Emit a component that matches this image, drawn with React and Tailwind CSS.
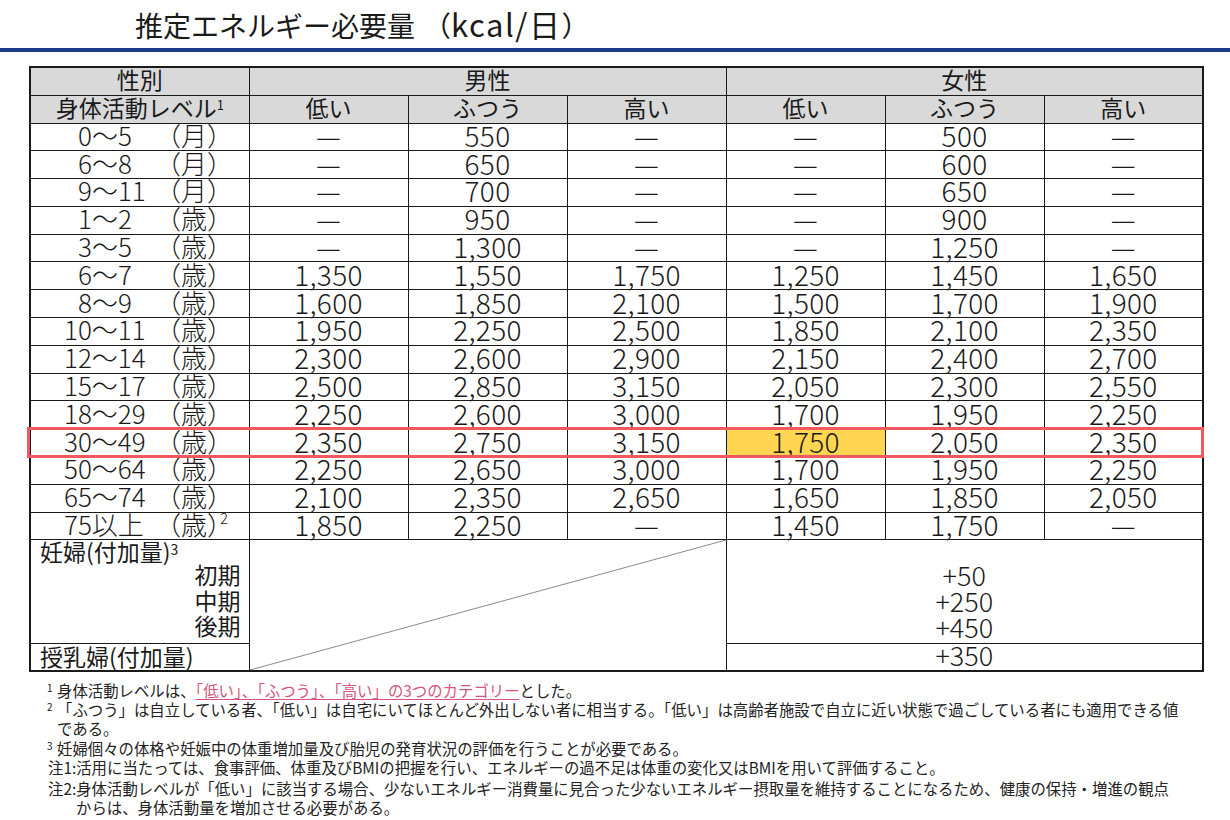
const rows = [
  { age: '0～5', unit: '（月）', pad: 'pl-[47px]', m: ['—', '550', '—'], f: ['—', '500', '—'] },
  { age: '6～8', unit: '（月）', pad: 'pl-[47px]', m: ['—', '650', '—'], f: ['—', '600', '—'] },
  { age: '9～11', unit: '（月）', pad: 'pl-[47px]', m: ['—', '700', '—'], f: ['—', '650', '—'] },
  { age: '1～2', unit: '（歳）', pad: 'pl-[47px]', m: ['—', '950', '—'], f: ['—', '900', '—'] },
  { age: '3～5', unit: '（歳）', pad: 'pl-[47px]', m: ['—', '1,300', '—'], f: ['—', '1,250', '—'] },
  { age: '6～7', unit: '（歳）', pad: 'pl-[47px]', m: ['1,350', '1,550', '1,750'], f: ['1,250', '1,450', '1,650'] },
  { age: '8～9', unit: '（歳）', pad: 'pl-[47px]', m: ['1,600', '1,850', '2,100'], f: ['1,500', '1,700', '1,900'] },
  { age: '10～11', unit: '（歳）', pad: 'pl-[33px]', m: ['1,950', '2,250', '2,500'], f: ['1,850', '2,100', '2,350'] },
  { age: '12～14', unit: '（歳）', pad: 'pl-[33px]', m: ['2,300', '2,600', '2,900'], f: ['2,150', '2,400', '2,700'] },
  { age: '15～17', unit: '（歳）', pad: 'pl-[33px]', m: ['2,500', '2,850', '3,150'], f: ['2,050', '2,300', '2,550'] },
  { age: '18～29', unit: '（歳）', pad: 'pl-[33px]', m: ['2,250', '2,600', '3,000'], f: ['1,700', '1,950', '2,250'] },
  { age: '30～49', unit: '（歳）', pad: 'pl-[33px]', m: ['2,350', '2,750', '3,150'], f: ['1,750', '2,050', '2,350'], mark: true },
  { age: '50～64', unit: '（歳）', pad: 'pl-[33px]', m: ['2,250', '2,650', '3,000'], f: ['1,700', '1,950', '2,250'] },
  { age: '65～74', unit: '（歳）', pad: 'pl-[33px]', m: ['2,100', '2,350', '2,650'], f: ['1,650', '1,850', '2,050'] },
  { age: '75以上', unit: '（歳）', pad: 'pl-[33px]', m: ['1,850', '2,250', '—'], f: ['1,450', '1,750', '—'], sup: '2' },
];

const cell = 'border border-[#1a1a1a] p-0 pb-[4px] text-center align-middle';
const num = 'border border-[#1a1a1a] p-0 pb-[4px] text-center align-middle text-[28px] tracking-[0.3px]';

export default function App() {
  return (
    <div className="w-[1230px] h-[820px] bg-white text-[#1a1a1a] overflow-hidden font-['Noto_Sans_CJK_JP','Noto_Sans',sans-serif]">
      {/* タイトル */}
      <div className="h-[48px] pl-[135px] pt-[9px]">
        <h1 className="text-[28px] leading-[30px] font-normal whitespace-nowrap">
          推定エネルギー必要量
          <span className="inline-block ml-[8px]">（</span>
          <span className="text-[31px] tracking-[1.5px]">kcal/日</span>
          <span className="inline-block">）</span>
        </h1>
      </div>
      <div className="h-[4px] bg-[#1f3b8c]" />

      {/* 表 */}
      <div className="relative ml-[29px] mt-[14px] w-[1173px]">
        <table className="w-[1173px] table-fixed border-collapse border-2 border-[#1a1a1a] leading-[22px]">
          <colgroup>
            <col className="w-[219px]" />
            <col className="w-[159px]" />
            <col className="w-[159px]" />
            <col className="w-[159px]" />
            <col className="w-[159px]" />
            <col className="w-[159px]" />
            <col className="w-[159px]" />
          </colgroup>
          <tbody>
            <tr className="h-[28px] bg-[#d9d9d9] text-[23px]">
              <td className={cell}>性別</td>
              <td className={cell} colSpan={3}>男性</td>
              <td className={cell} colSpan={3}>女性</td>
            </tr>
            <tr className="h-[28px] bg-[#d9d9d9] text-[23px]">
              <td className={cell}>
                身体活動レベル<sup className="text-[13px] relative -top-[7px]">1</sup>
              </td>
              <td className={cell}>低い</td>
              <td className={cell}>ふつう</td>
              <td className={cell}>高い</td>
              <td className={cell}>低い</td>
              <td className={cell}>ふつう</td>
              <td className={cell}>高い</td>
            </tr>
            {rows.map((r) => (
              <tr key={r.age} className="h-[27.8px] text-[26px] font-light">
                <td className="border border-[#1a1a1a] p-0 pb-[4px] align-middle">
                  <div className="flex items-center">
                    <span className={`w-[124px] ${r.pad}`}>{r.age}</span>
                    <span>{r.unit}</span>
                    {r.sup && <sup className="text-[15px] relative -top-[6px] -ml-[13px]">{r.sup}</sup>}
                  </div>
                </td>
                {r.m.map((v, i) => (
                  <td key={'m' + i} className={num}>{v}</td>
                ))}
                {r.f.map((v, i) => (
                  <td
                    key={'f' + i}
                    className={`${num} ${r.mark && i === 0 ? 'bg-[#ffd651]' : ''}`}
                  >
                    {v}
                  </td>
                ))}
              </tr>
            ))}
            <tr className="h-[104px]">
              <td className="border border-[#1a1a1a] p-0 align-top text-[23px] leading-[25.5px]">
                <div className="pl-[9px] h-[22px] leading-[22px]">
                  妊婦(付加量)<sup className="text-[14px] relative -top-[6px]">3</sup>
                </div>
                <div className="pr-[8px] text-right">初期</div>
                <div className="pr-[8px] text-right">中期</div>
                <div className="pr-[8px] text-right">後期</div>
              </td>
              <td className="border border-[#1a1a1a] p-0 relative" colSpan={3} rowSpan={2}>
                <svg className="absolute inset-0 w-full h-full" viewBox="0 0 100 100" preserveAspectRatio="none">
                  <line x1="0" y1="100" x2="100" y2="0" stroke="#8a8a8a" strokeWidth="1" vectorEffect="non-scaling-stroke" />
                </svg>
              </td>
              <td className="border border-[#1a1a1a] p-0 align-top text-center text-[27px] leading-[26px] font-light" colSpan={3}>
                <div className="pt-[22px]">+50</div>
                <div>+250</div>
                <div>+450</div>
              </td>
            </tr>
            <tr className="h-[26px]">
              <td className="border border-[#1a1a1a] p-0 pl-[9px] pb-[3px] text-[23px] align-middle">授乳婦(付加量)</td>
              <td className={`${cell} text-[27px] font-light`} colSpan={3}>+350</td>
            </tr>
          </tbody>
        </table>

        {/* 強調枠 */}
        <div className="absolute left-[-2px] top-[361px] w-[1177px] h-[31px] border-[3px] border-[#f05a5e] pointer-events-none" />
      </div>

      {/* 注記 */}
      <div className="mt-[9px] text-[15.4px] leading-[19px] text-[#222] whitespace-nowrap">
        <p className="pl-[57px] -indent-[10px]">
          <sup className="inline-block w-[10px] text-[10px] indent-0">1</sup>身体活動レベルは、
          <span className="text-[#d4567e] underline decoration-[#d4567e] underline-offset-2">
            「低い」、「ふつう」、「高い」の3つのカテゴリー
          </span>
          とした。
        </p>
        <p className="pl-[57px] -indent-[10px]">
          <sup className="inline-block w-[10px] text-[10px] indent-0">2</sup>
          「ふつう」は自立している者、「低い」は自宅にいてほとんど外出しない者に相当する。「低い」は高齢者施設で自立に近い状態で過ごしている者にも適用できる値
          <br />
          である。
        </p>
        <p className="pl-[57px] -indent-[10px] mt-[1px]">
          <sup className="inline-block w-[10px] text-[10px] indent-0">3</sup>
          妊婦個々の体格や妊娠中の体重増加量及び胎児の発育状況の評価を行うことが必要である。
        </p>
        <p className="pl-[76px] -indent-[28px]">
          注1:活用に当たっては、食事評価、体重及びBMIの把握を行い、エネルギーの過不足は体重の変化又はBMIを用いて評価すること。
        </p>
        <p className="pl-[76px] -indent-[28px] mt-[2px]">
          注2:身体活動レベルが「低い」に該当する場合、少ないエネルギー消費量に見合った少ないエネルギー摂取量を維持することになるため、健康の保持・増進の観点
          <br />
          からは、身体活動量を増加させる必要がある。
        </p>
      </div>
    </div>
  );
}
